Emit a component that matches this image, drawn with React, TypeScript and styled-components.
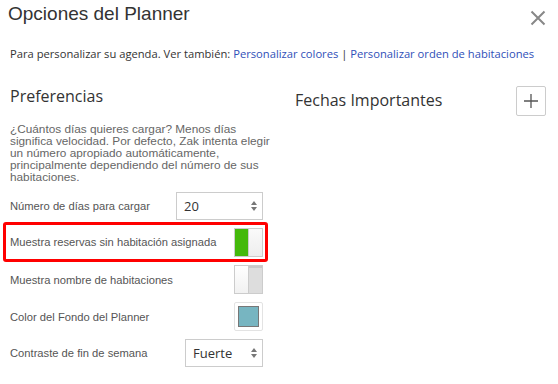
import * as React from 'react'
import styled, { createGlobalStyle } from 'styled-components'

const GlobalStyle = createGlobalStyle`
  body {
    margin: 0;
    background: #fff;
    font-family: "Liberation Sans", Arial, sans-serif;
  }
`

const Dialog = styled.div`
  width: 558px;
  height: 384px;
  overflow: hidden;
  background: #fff;
`

const Header = styled.header`
  display: flex;
  justify-content: space-between;
  align-items: flex-start;
  padding: 3px 12px 0 8px;
  height: 38px;
`

const Title = styled.h1`
  margin: 0;
  font-family: "Liberation Sans", Arial, sans-serif;
  font-weight: normal;
  font-size: 19px;
  line-height: 22px;
  color: #333;
`

const CloseButton = styled.button`
  border: 0;
  background: none;
  padding: 0;
  margin-top: 7px;
  width: 16px;
  height: 16px;
  cursor: pointer;
`

const Intro = styled.p`
  margin: 0;
  padding: 5px 10px 0;
  font-family: "Open Sans", sans-serif;
  font-size: 11.2px;
  line-height: 16px;
  color: #333;

  a {
    color: #2f4fb8;
    text-decoration: none;
  }
`

const Columns = styled.div`
  display: flex;
  padding: 0 12px 0 10px;
  margin-top: 23px;
`

const LeftColumn = styled.section`
  width: 253px;
`

const RightColumn = styled.section`
  flex: 1;
  display: flex;
  justify-content: space-between;
  align-items: flex-start;
  padding-left: 32px;
  padding-top: 1px;
`

const Heading = styled.h2`
  margin: 0;
  font-family: "Open Sans", sans-serif;
  font-weight: normal;
  font-size: 16px;
  line-height: 22px;
  color: #333;
`

const FechasHeading = styled(Heading)`
  margin-top: 3px;
`

const Description = styled.p`
  margin: 16px 0 0;
  width: 265px;
  font-size: 11.8px;
  line-height: 12px;
  color: #666;
`

const Rows = styled.div`
  margin-top: 9px;
  display: flex;
  flex-direction: column;
`

const Row = styled.div<{ $height: number; $after: number; $highlight?: boolean }>`
  box-sizing: border-box;
  display: flex;
  justify-content: space-between;
  align-items: center;
  height: ${p => p.$height}px;
  margin-bottom: ${p => p.$after}px;
  font-size: 11.2px;
  color: #555;

  ${p => p.$highlight && `
    margin-left: -7px;
    margin-right: -5px;
    padding: 0 2px 0 4px;
    border: 3px solid #f00;
    border-radius: 3px;
  `}
`

const SelectBox = styled.div<{ $width: number }>`
  box-sizing: border-box;
  width: ${p => p.$width}px;
  height: 28px;
  border: 1px solid #ccc;
  display: flex;
  align-items: center;
  justify-content: space-between;
  padding: 0 5px 0 7px;
  font-family: "Open Sans", sans-serif;
  font-size: 13px;
  color: #333;
`

const Toggle = styled.div<{ $on: boolean }>`
  box-sizing: border-box;
  width: 29px;
  height: 29px;
  display: flex;
  border: 1px solid #ccc;

  span:first-child {
    flex: 1;
    background: ${p => (p.$on ? '#44b90b' : 'linear-gradient(#fff, #f1f1f1)')};
    border-right: 1px solid #ccc;
  }

  span:last-child {
    flex: 1;
    background: ${p => (p.$on ? 'linear-gradient(#fafafa, #eee)' : '#ddd')};
    border-top: ${p => (p.$on ? '0' : '2px solid #c8c8c8')};
  }
`

const Swatch = styled.div`
  box-sizing: border-box;
  width: 29px;
  height: 29px;
  border: 1px solid #e3e3e3;
  border-radius: 2px;
  padding: 3px;

  div {
    width: 100%;
    height: 100%;
    box-sizing: border-box;
    background: #77b5c1;
    border: 1px solid #777;
  }
`

const AddButton = styled.button`
  box-sizing: border-box;
  width: 30px;
  height: 30px;
  border: 1px solid #ccc;
  border-radius: 2px;
  background: #fff;
  padding: 0;
  display: flex;
  align-items: center;
  justify-content: center;
`

function Arrows () {
  return (
    <svg width="6" height="10" viewBox="0 0 6 10">
      <path d="M3 0 L6 4 H0 Z M0 6 H6 L3 10 Z" fill="#777" />
    </svg>
  )
}

export default function App () {
  return (
    <Dialog>
      <GlobalStyle />
      <Header>
        <Title>Opciones del Planner</Title>
        <CloseButton aria-label="Cerrar">
          <svg width="16" height="16" viewBox="0 0 16 16">
            <path d="M1.5 1.5 L14.5 14.5 M14.5 1.5 L1.5 14.5" stroke="#888" strokeWidth="2" />
          </svg>
        </CloseButton>
      </Header>
      <Intro>
        Para personalizar su agenda. Ver también: <a href="#">Personalizar colores</a> | <a href="#">Personalizar orden de habitaciones</a>
      </Intro>
      <Columns>
        <LeftColumn>
          <Heading>Preferencias</Heading>
          <Description>
            ¿Cuántos días quieres cargar? Menos días significa velocidad. Por defecto, Zak intenta elegir un número apropiado automáticamente, principalmente dependiendo del número de sus habitaciones.
          </Description>
          <Rows>
            <Row $height={28} $after={2}>
              Número de días para cargar
              <SelectBox $width={87}>20<Arrows /></SelectBox>
            </Row>
            <Row $height={40} $after={3} $highlight>
              Muestra reservas sin habitación asignada
              <Toggle $on><span /><span /></Toggle>
            </Row>
            <Row $height={29} $after={8}>
              Muestra nombre de habitaciones
              <Toggle $on={false}><span /><span /></Toggle>
            </Row>
            <Row $height={29} $after={8}>
              Color del Fondo del Planner
              <Swatch><div /></Swatch>
            </Row>
            <Row $height={28} $after={0}>
              Contraste de fin de semana
              <SelectBox $width={78}>Fuerte<Arrows /></SelectBox>
            </Row>
          </Rows>
        </LeftColumn>
        <RightColumn>
          <FechasHeading>Fechas Importantes</FechasHeading>
          <AddButton aria-label="Añadir">
            <svg width="14" height="14" viewBox="0 0 14 14">
              <path d="M7 0 V14 M0 7 H14" stroke="#555" strokeWidth="1.3" />
            </svg>
          </AddButton>
        </RightColumn>
      </Columns>
    </Dialog>
  )
}
